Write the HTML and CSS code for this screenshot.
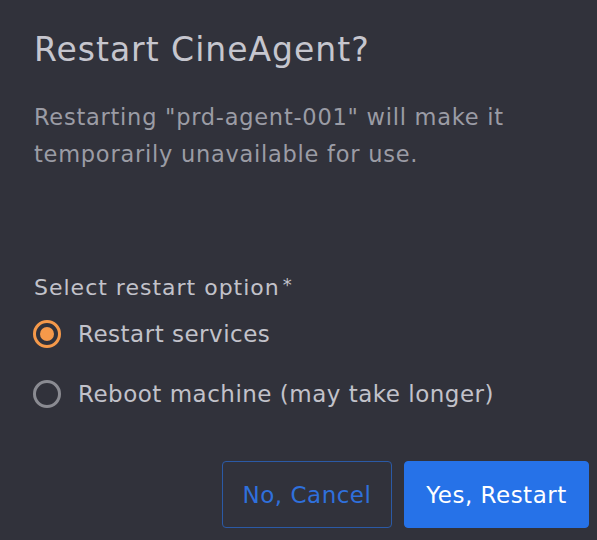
FILE: index.html
```html
<!DOCTYPE html>
<html>
<head>
<meta charset="utf-8">
<link rel="stylesheet" href="styles.css">
</head>
<body>
<div class="dialog">
  <h1 class="title">Restart CineAgent?</h1>
  <p class="desc">Restarting "prd-agent-001" will make it temporarily unavailable for use.</p>
  <div class="field">
    <div class="label">Select restart option<span class="req">*</span></div>
    <div class="options">
      <label class="option"><span class="radio checked"></span><span class="opt-text">Restart services</span></label>
      <label class="option"><span class="radio"></span><span class="opt-text">Reboot machine (may take longer)</span></label>
    </div>
  </div>
  <div class="actions">
    <button class="btn btn-secondary">No, Cancel</button>
    <button class="btn btn-primary">Yes, Restart</button>
  </div>
</div>
</body>
</html>
```

FILE: styles.css
```css
html, body {
  margin: 0;
  padding: 0;
  background: #31323b;
}
.dialog {
  width: 597px;
  height: 540px;
  box-sizing: border-box;
  background: #31323b;
  padding: 29px 8px 0 34px;
  font-family: "DejaVu Sans", "Open Sans", sans-serif;
  display: flex;
  flex-direction: column;
}
.title {
  margin: 0;
  font-size: 33px;
  line-height: 42px;
  letter-spacing: 1px;
  font-weight: 400;
  color: #c6c6ce;
}
.desc {
  margin: 28px 0 0;
  width: 500px;
  font-size: 22.5px;
  line-height: 37px;
  letter-spacing: 0.75px;
  color: #9b9ca5;
}
.field {
  margin-top: 97px;
}
.label {
  font-size: 22px;
  line-height: 30px;
  letter-spacing: 1px;
  color: #c2c2ca;
}
.req {
  font-size: 18px;
  vertical-align: 4px;
  margin-left: 3px;
}
.options {
  margin-top: 11px;
  display: flex;
  flex-direction: column;
  gap: 20px;
}
.option {
  display: flex;
  align-items: center;
  height: 40px;
  gap: 17px;
}
.radio {
  width: 28px;
  height: 28px;
  box-sizing: border-box;
  border-radius: 50%;
  border: 3px solid #8a8b92;
  margin-left: -1px;
  display: flex;
  align-items: center;
  justify-content: center;
}
.radio.checked {
  border-color: #f5994a;
}
.radio.checked::after {
  content: "";
  width: 14px;
  height: 14px;
  border-radius: 50%;
  background: #f5994a;
}
.opt-text {
  font-size: 23px;
  line-height: 40px;
  letter-spacing: 0.5px;
  color: #c2c2ca;
}
.actions {
  margin-top: auto;
  margin-bottom: 12px;
  display: flex;
  justify-content: flex-end;
  gap: 12px;
}
.btn {
  height: 67px;
  box-sizing: border-box;
  border-radius: 4px;
  font-family: "DejaVu Sans", "Open Sans", sans-serif;
  font-size: 23px;
  letter-spacing: 0.5px;
  padding: 0;
  cursor: pointer;
}
.btn-secondary {
  width: 170px;
  background: transparent;
  border: 1px solid #2b5aa6;
  color: #2f70dc;
}
.btn-primary {
  width: 185px;
  background: #2672e8;
  border: 1px solid #2672e8;
  color: #ffffff;
}
```
